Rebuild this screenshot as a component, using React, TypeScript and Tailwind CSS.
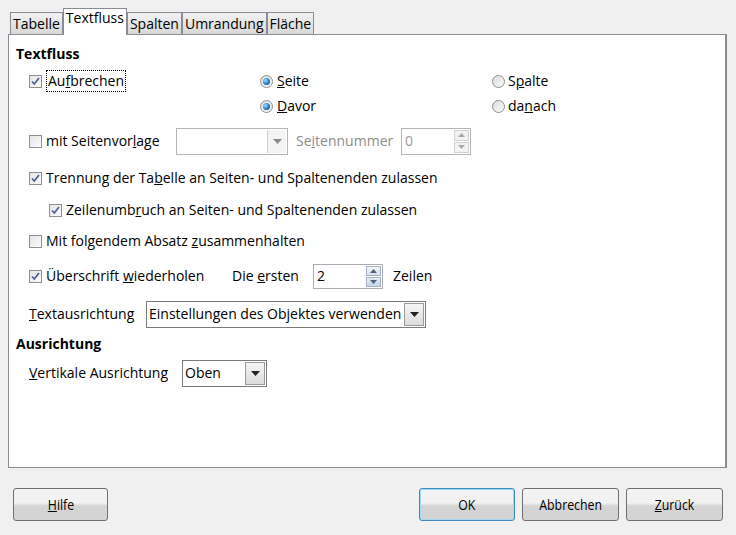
import React from "react";

const font = { fontFamily: '"Open Sans", "Noto Sans", sans-serif' };

function Check({ checked }: { checked: boolean }) {
  return (
    <span className="flex h-[13px] w-[13px] shrink-0 items-center justify-center border border-[#8e8f8f] bg-gradient-to-br from-[#e6e6e6] to-[#fbfbfb]">
      {checked ? (
        <svg width="9" height="9" viewBox="0 0 9 9">
          <path d="M1 4.5 L3.3 7 L8 1" fill="none" stroke="#4a5f97" strokeWidth="1.7" />
        </svg>
      ) : null}
    </span>
  );
}

function Radio({ checked }: { checked: boolean }) {
  return (
    <span className="flex h-[13px] w-[13px] shrink-0 items-center justify-center rounded-full border border-[#8e8f8f] bg-gradient-to-br from-[#dcdcdc] to-[#fafafa]">
      {checked ? (
        <span className="h-[7px] w-[7px] rounded-full bg-[radial-gradient(circle_at_35%_35%,#9fe0ff,#1a74b8_60%,#0d4a80)]" />
      ) : null}
    </span>
  );
}

function Arrow({ color = "#222" }: { color?: string }) {
  return (
    <svg width="9" height="5" viewBox="0 0 9 5">
      <path d="M0 0 H9 L4.5 5 Z" fill={color} />
    </svg>
  );
}

function Spin({ value, enabled, h }: { value: string; enabled: boolean; h: string }) {
  return (
    <div
      className={`flex ${h} w-[70px] border ${enabled ? "border-[#abadb3]" : "border-[#b5b5b5]"} bg-white`}
    >
      <span className={`flex flex-1 items-center pl-[3px] ${enabled ? "text-black" : "text-[#9a9a9a]"}`}>
        {value}
      </span>
      <div className="flex w-[17px] flex-col gap-px p-px">
        <span
          className={`flex flex-1 items-center justify-center border ${enabled ? "border-[#a8b3c4] bg-gradient-to-b from-[#f2f4f8] to-[#d6e2f0]" : "border-[#d2d2d2] bg-[#f2f2f2]"}`}
        >
          <svg width="7" height="4" viewBox="0 0 7 4">
            <path d="M0 4 L3.5 0 L7 4 Z" fill={enabled ? "#4d6185" : "#a8a8a8"} />
          </svg>
        </span>
        <span
          className={`flex flex-1 items-center justify-center border ${enabled ? "border-[#a8b3c4] bg-gradient-to-b from-[#e4ecf5] to-[#c4d6ea]" : "border-[#d2d2d2] bg-[#f2f2f2]"}`}
        >
          <svg width="7" height="4" viewBox="0 0 7 4">
            <path d="M0 0 L3.5 4 L7 0 Z" fill={enabled ? "#4d6185" : "#a8a8a8"} />
          </svg>
        </span>
      </div>
    </div>
  );
}

function Tab({ label, active }: { label: string; active?: boolean }) {
  return active ? (
    <div className="relative z-10 mb-[-1px] flex h-[27px] items-start border border-b-0 border-[#898c95] bg-white px-[2px] pt-[2px]">
      {label}
    </div>
  ) : (
    <div className="flex h-[22px] items-center border border-b-0 border-[#898c95] bg-gradient-to-b from-[#f2f2f2] to-[#d8d8d8] px-[2px]">
      {label}
    </div>
  );
}

function Btn({ children, w, def }: { children: React.ReactNode; w: string; def?: boolean }) {
  return (
    <div
      className={`flex h-[33px] ${w} items-center justify-center rounded-[3px] border ${def ? "border-[#3c8bbd] shadow-[inset_0_0_0_1px_#9fdcf4]" : "border-[#707070]"} bg-gradient-to-b from-[#f2f2f2] from-45% to-[#d4d4d4] to-55%`}
    >
      <span className="inline-block scale-x-[0.88]">{children}</span>
    </div>
  );
}

export default function App() {
  return (
    <div style={font} className="h-[535px] w-[736px] bg-[#f0f0f0] text-[14px] leading-none text-black">
      <div className="flex h-[34px] items-end pl-[10px]">
        <Tab label="Tabelle" />
        <Tab label="Textfluss" active />
        <Tab label="Spalten" />
        <Tab label="Umrandung" />
        <Tab label="Fläche" />
      </div>

      <div className="ml-[8px] flex h-[434px] w-[719px] flex-col border border-r-2 border-[#898c95] bg-white pl-[7px]">
        <div className="mt-[9px] flex h-[20px] items-center font-bold">Textfluss</div>

        <div className="mt-[4px] flex h-[26px] items-center pl-[13px]">
          <div className="flex w-[231px] items-center gap-[4px]">
            <Check checked />
            <span className="border border-dotted border-black px-px py-[3px]">
              Au<u>f</u>brechen
            </span>
          </div>
          <div className="flex w-[232px] items-center gap-[4px]">
            <Radio checked />
            <span>
              <u>S</u>eite
            </span>
          </div>
          <div className="flex items-center gap-[3px]">
            <Radio checked={false} />
            <span>
              S<u>p</u>alte
            </span>
          </div>
        </div>

        <div className="flex h-[24px] items-center pl-[13px]">
          <div className="w-[231px]" />
          <div className="flex w-[232px] items-center gap-[4px]">
            <Radio checked />
            <span>
              <u>D</u>avor
            </span>
          </div>
          <div className="flex items-center gap-[3px]">
            <Radio checked={false} />
            <span>
              da<u>n</u>ach
            </span>
          </div>
        </div>

        <div className="mt-[9px] flex h-[28px] items-center pl-[13px]">
          <div className="flex w-[147px] items-center gap-[4px]">
            <Check checked={false} />
            <span>
              mit Seitenvor<u>l</u>age
            </span>
          </div>
          <div className="flex h-[27px] w-[112px] border border-[#b5b5b5] bg-white">
            <span className="flex-1" />
            <span className="m-px flex w-[19px] items-center justify-center border-l border-[#d0d0d0] bg-[#f4f4f4]">
              <Arrow color="#8a8a8a" />
            </span>
          </div>
          <span className="ml-[8px] w-[105px] text-[#8d8d8d]">
            Se<u>i</u>tennummer
          </span>
          <Spin value="0" enabled={false} h="h-[27px]" />
        </div>

        <div className="mt-[11px] flex h-[24px] items-center gap-[4px] pl-[13px]">
          <Check checked />
          <span>
            Trennung der Ta<u>b</u>elle an Seiten- und Spaltenenden zulassen
          </span>
        </div>

        <div className="mt-[8px] flex h-[24px] items-center gap-[4px] pl-[33px]">
          <Check checked />
          <span>
            Zeilenumb<u>r</u>uch an Seiten- und Spaltenenden zulassen
          </span>
        </div>

        <div className="mt-[7px] flex h-[24px] items-center gap-[4px] pl-[13px]">
          <Check checked={false} />
          <span>
            Mit folgendem Absatz <u>z</u>usammenhalten
          </span>
        </div>

        <div className="mt-[10px] flex h-[26px] items-center pl-[13px]">
          <div className="flex w-[203px] items-center gap-[4px]">
            <Check checked />
            <span>
              Überschrift <u>w</u>iederholen
            </span>
          </div>
          <span className="w-[81px]">
            Die <u>e</u>rsten
          </span>
          <Spin value="2" enabled h="h-[25px]" />
          <span className="ml-[10px]">Zeilen</span>
        </div>

        <div className="mt-[12px] flex h-[26px] items-center pl-[13px]">
          <span className="w-[117px]">
            <u>T</u>extausrichtung
          </span>
          <div className="flex h-[27px] w-[280px] border border-[#7a7a7a] bg-white">
            <span className="flex flex-1 items-center pl-[2px]">Einstellungen des Objektes verwenden</span>
            <span className="m-px flex w-[20px] items-center justify-center border border-[#9a9a9a] bg-gradient-to-b from-[#f5f5f5] to-[#dcdcdc]">
              <Arrow />
            </span>
          </div>
        </div>

        <div className="mt-[7px] flex h-[20px] items-center font-bold">Ausrichtung</div>

        <div className="mt-[6px] flex h-[26px] items-center pl-[13px]">
          <span className="w-[153px]">
            <u>V</u>ertikale Ausrichtung
          </span>
          <div className="flex h-[27px] w-[85px] border border-[#7a7a7a] bg-white">
            <span className="flex flex-1 items-center pl-[2px]">Oben</span>
            <span className="m-px flex w-[20px] items-center justify-center border border-[#9a9a9a] bg-gradient-to-b from-[#f5f5f5] to-[#dcdcdc]">
              <Arrow />
            </span>
          </div>
        </div>
      </div>

      <div className="mt-[20px] flex px-[13px]">
        <Btn w="w-[95px]">
          <u>H</u>ilfe
        </Btn>
        <div className="flex-1" />
        <div className="flex gap-[7px]">
          <Btn w="w-[96px]" def>
            OK
          </Btn>
          <Btn w="w-[97px]">Abbrechen</Btn>
          <Btn w="w-[97px]">
            <u>Z</u>urück
          </Btn>
        </div>
      </div>
    </div>
  );
}
